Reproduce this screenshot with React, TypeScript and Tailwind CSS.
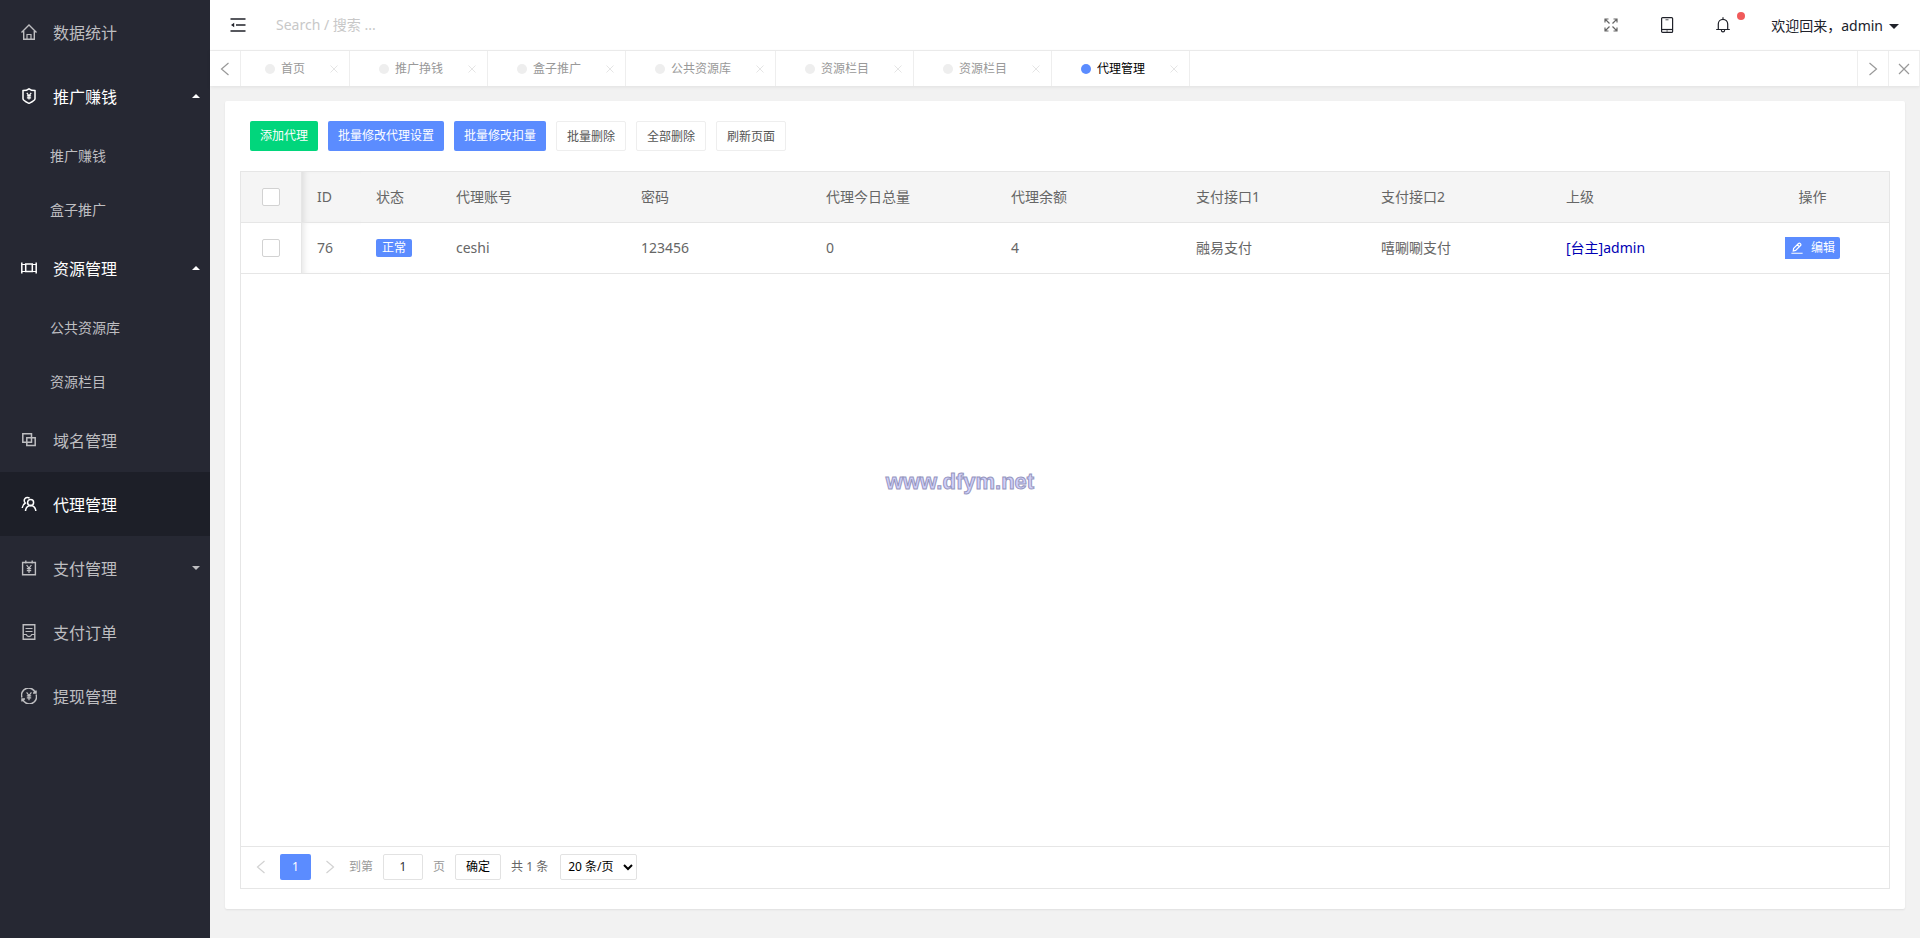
import type { ReactNode } from "react";

const Svg = ({ children, className = "size-4" }: { children: ReactNode; className?: string }) => (
  <svg viewBox="0 0 16 16" className={`shrink-0 ${className}`} fill="none" stroke="currentColor" strokeWidth="1.2" aria-hidden="true">
    {children}
  </svg>
);

const HomeIcon = () => (
  <Svg>
    <path strokeWidth="1.4" d="M.5 8.500 8 1l7.500 7.500M2.700 7v8.300h10.600V7" />
    <path d="M6 15.300v-4.800h4v4.800" />
  </Svg>
);

const ShieldIcon = () => (
  <Svg>
    <path strokeWidth="1.5" d="M8 .8c1.600 1.200 3.600 1.700 6 1.800v8.100c0 1.800-2.600 3-6 4.700-3.400-1.700-6-2.900-6-4.700V2.600C4.400 2.500 6.400 2 8 .8Z" />
    <path d="m5.800 4.800 2.200 3 2.200-3M8 7.500v4M5.900 7.900h4.200M5.900 9.800h4.200" />
  </Svg>
);

const ResourceIcon = () => (
  <Svg>
    <path strokeWidth="1.500" d="M.8 2.500v11M15.200 2.500v11M4.700 4h6.600v7.500H4.700z" />
    <path d="M.8 4.500h4M11.200 4.500h4M.8 11.500h4M11.200 11.500h4" />
  </Svg>
);

const DomainIcon = () => (
  <Svg>
    <path strokeWidth="1.500" d="M1.800 1.800h8.700v8.400H1.800zM5.800 5.800h8.400v7.700H5.800z" />
  </Svg>
);

const AgentIcon = () => (
  <Svg>
    <path strokeWidth="1.500" d="M8.600 2.200A3 3 0 1 0 4.300 7C2.500 8 1.500 9.500 1.200 12" />
    <circle cx="9.600" cy="6.500" r="3" strokeWidth="1.500" />
    <path strokeWidth="1.500" d="M4.500 15c.3-3 2-5.300 5.100-5.500 3.100.2 4.900 2.500 5.200 5.500" />
  </Svg>
);

const PayIcon = () => (
  <Svg>
    <path strokeWidth="1.400" d="M1.600 2.500h12.800v12.200H1.600zM4.800.5v3M11.200.5v3" />
    <path d="m5.600 5 2.400 3.200L10.400 5M8 8v5M5.800 8.600h4.400M5.800 10.600h4.400" />
  </Svg>
);

const OrderIcon = () => (
  <Svg>
    <path strokeWidth="1.400" d="M2.200.7h11.600v14.600H2.200z" />
    <path d="M4.500 4.500h7M4.500 7.500h7M2.200 10.500h3C5.800 12 6.800 12.600 8 12.600s2.200-.6 2.800-2.100h3" />
  </Svg>
);

const WithdrawIcon = () => (
  <Svg>
    <path strokeWidth="1.500" d="M.9 9.500A7.100 7.100 0 0 1 14.300 4.800M15.100 6.500A7.100 7.100 0 0 1 1.700 11.200M12 5h3V2.500M4 11H1v2.500" />
    <path d="m5.600 4.300 2.400 3.200 2.400-3.200M8 7.500v4.700M5.800 7.900h4.400M5.800 9.800h4.400" />
  </Svg>
);

const Chevron = ({ dir }: { dir: "left" | "right" }) => (
  <Svg>
    <path d={dir === "left" ? "M11.500 2 4.500 8l7 6" : "m4.500 2 7 6-7 6"} />
  </Svg>
);

const Caret = ({ up = false }: { up?: boolean }) => (
  <svg viewBox="0 0 8 4" className="h-1 w-2" fill="currentColor" aria-hidden="true">
    <path d={up ? "M0 4 4 0l4 4z" : "M0 0h8L4 4z"} />
  </svg>
);

const menu = [
  { name: "数据统计", icon: <HomeIcon /> },
  { name: "推广赚钱", icon: <ShieldIcon />, open: true, children: ["推广赚钱", "盒子推广"] },
  { name: "资源管理", icon: <ResourceIcon />, open: true, children: ["公共资源库", "资源栏目"] },
  { name: "域名管理", icon: <DomainIcon /> },
  { name: "代理管理", icon: <AgentIcon />, active: true },
  { name: "支付管理", icon: <PayIcon />, open: false, children: [] },
  { name: "支付订单", icon: <OrderIcon /> },
  { name: "提现管理", icon: <WithdrawIcon /> },
];

const tabs = ["首页", "推广挣钱", "盒子推广", "公共资源库", "资源栏目", "资源栏目", "代理管理"];

const columns = ["代理账号", "密码", "代理今日总量", "代理余额", "支付接口1", "支付接口2", "上级"];

const Sidebar = () => (
  <nav className="w-[210px] shrink-0 bg-[#262833] text-[#bebec1]">
    <ul>
      {menu.map((item) => (
        <li key={item.name}>
          <a
            href="#"
            className={`flex h-16 items-center pr-[10px] pl-[21px] text-base ${item.active ? "bg-[#1d1f28] text-white" : ""} ${item.open ? "text-white" : ""}`}
          >
            {item.icon}
            <span className="ml-4 flex-1 pt-0.5">{item.name}</span>
            {item.children && <Caret up={item.open} />}
          </a>
          {item.open && (
            <ul>
              {item.children?.map((child) => (
                <li key={child}>
                  <a href="#" className="flex h-[54px] items-center pt-0.5 pl-[50px] text-sm">
                    {child}
                  </a>
                </li>
              ))}
            </ul>
          )}
        </li>
      ))}
    </ul>
  </nav>
);

const Header = () => (
  <header className="flex h-[51px] items-center border-b border-[#eeeeee] bg-white pr-[21px] pl-5 text-[#20222a]">
    <button type="button" aria-label="收起菜单">
      <Svg>
        <path strokeWidth="1.500" d="M.5 2h15M6 8h9.500M.5 14h15" />
        <path fill="currentColor" stroke="none" d="M4.200 5.800v4.400L1 8z" />
      </Svg>
    </button>
    <input
      type="text"
      aria-label="搜索"
      placeholder="Search / 搜索 ..."
      className="ml-[30px] w-40 text-sm outline-none placeholder:text-[#c8c8c8]"
    />
    <div className="ml-auto flex items-center">
      <button type="button" aria-label="全屏" className="mr-10 text-[#666]">
        <Svg>
          <path d="M6.500 6.500 2 2m0 3.500V2h3.500M9.500 6.500 14 2m-3.500 0H14v3.500M6.500 9.500 2 14m0-3.500V14h3.500M9.500 9.500 14 14m-3.500 0H14v-3.500" />
        </Svg>
      </button>
      <button type="button" aria-label="手机" className="mr-10">
        <Svg>
          <rect x="2.600" y=".6" width="11" height="14.800" rx="1" />
          <path d="M2.600 12.500h11" />
          <path strokeWidth=".8" d="M6.500 2.800h3M7.300 14h1.600" />
        </Svg>
      </button>
      <button type="button" aria-label="消息" className="relative mr-10">
        <Svg>
          <path d="M1.200 12.500h13.600M3.300 12.500V7a4.700 4.700 0 0 1 9.400 0v5.500M8 .3v2M6.300 13c.2 2.600 3.200 2.600 3.400 0" />
        </Svg>
        <span className="absolute -top-[5px] -right-[14px] size-2 rounded-full bg-[#f05a5a]" />
      </button>
      <button type="button" className="flex items-center gap-[6px] pt-0.5 text-sm">
        欢迎回来，admin
        <svg viewBox="0 0 10 5" className="h-[5px] w-[10px]" fill="currentColor" aria-hidden="true">
          <path d="M0 0h10L5 5z" />
        </svg>
      </button>
    </div>
  </header>
);

const TabBar = () => (
  <div className="flex h-[35px] bg-white text-xs text-[#999] shadow-[0_1px_4px_rgba(0,0,0,0.08)]">
    <button type="button" aria-label="向左" className="flex w-[31px] items-center justify-center border-r border-[#eeeeee]">
      <Chevron dir="left" />
    </button>
    {tabs.map((tab, i) => {
      const active = i === tabs.length - 1;
      return (
        <div key={i} className={`flex items-center border-r border-[#eeeeee] pr-[11px] ${i === 0 ? "pl-6" : "pl-[29px]"}`}>
          <span className={`size-[10px] rounded-full ${active ? "bg-[#5b8cff]" : "bg-[#eeeeee]"}`} />
          <a href="#" className={`ml-[6px] ${active ? "text-black" : ""}`}>
            {tab}
          </a>
          <button type="button" aria-label={`关闭${tab}`} className="ml-[25px] text-[#e2e2e2]">
            <Svg className="size-2">
              <path strokeWidth="1.800" d="m1 1 14 14M15 1 1 15" />
            </Svg>
          </button>
        </div>
      );
    })}
    <button type="button" aria-label="向右" className="ml-auto flex w-8 items-center justify-center border-x border-[#eeeeee]">
      <Chevron dir="right" />
    </button>
    <button type="button" aria-label="关闭标签" className="flex w-[31px] items-center justify-center border-r border-[#eeeeee]">
      <Svg>
        <path d="m3 3 10 10M13 3 3 13" />
      </Svg>
    </button>
  </div>
);

const Toolbar = () => (
  <div className="flex gap-[10px] px-[10px] text-xs">
    <button type="button" className="h-[30px] rounded-xs bg-[#01d67c] px-[10px] text-white">添加代理</button>
    <button type="button" className="h-[30px] rounded-xs bg-[#5b8cff] px-[10px] text-white">批量修改代理设置</button>
    <button type="button" className="h-[30px] rounded-xs bg-[#5b8cff] px-[10px] text-white">批量修改扣量</button>
    {["批量删除", "全部删除", "刷新页面"].map((name) => (
      <button key={name} type="button" className="h-[30px] rounded-xs border border-[#eeeeee] bg-white px-[10px] pt-0.5 text-[#555]">
        {name}
      </button>
    ))}
  </div>
);

const Check = ({ label }: { label: string }) => (
  <input
    type="checkbox"
    aria-label={label}
    className="block size-[18px] appearance-none rounded-xs border border-[#d2d2d2] bg-white"
  />
);

const AgentTable = () => (
  <table className="w-full table-fixed border-separate border-spacing-0 text-left text-sm text-[#666] [&_td]:border-b [&_td]:border-[#e6e6e6] [&_th]:border-b [&_th]:border-[#e6e6e6] [&_th]:font-normal">
    <colgroup>
      <col className="w-[60px]" />
      <col className="w-[60px]" />
      <col className="w-[80px]" />
      {columns.map((c) => (
        <col key={c} className="w-[185px]" />
      ))}
      <col />
    </colgroup>
    <thead>
      <tr className="h-[51px] bg-[#f5f5f5]">
        <th className="pl-[21px]">
          <Check label="全选" />
        </th>
        <th className="border-l pl-[15px] shadow-[inset_6px_0_6px_-4px_rgba(0,0,0,0.1)]">ID</th>
        <th className="pl-[15px]">状态</th>
        {columns.map((c) => (
          <th key={c} className="pl-[15px]">{c}</th>
        ))}
        <th className="text-center">操作</th>
      </tr>
    </thead>
    <tbody>
      <tr className="h-[51px]">
        <td className="pl-[21px]">
          <Check label="选择 76" />
        </td>
        <td className="border-l pl-[15px] shadow-[inset_6px_0_6px_-4px_rgba(0,0,0,0.1)]">76</td>
        <td className="pl-[15px]">
          <span className="flex h-[18px] w-9 items-center justify-center rounded-xs bg-[#5b8cff] text-xs text-white">正常</span>
        </td>
        <td className="pl-[15px]">ceshi</td>
        <td className="pl-[15px]">123456</td>
        <td className="pl-[15px]">0</td>
        <td className="pl-[15px]">4</td>
        <td className="pl-[15px]">融易支付</td>
        <td className="pl-[15px]">嘻唰唰支付</td>
        <td className="pl-[15px] text-[#0000b4]">[台主]admin</td>
        <td>
          <button type="button" className="mx-auto flex h-[22px] items-center gap-2 rounded-r-xs bg-[#5b8cff] pr-[5px] pl-[6px] text-xs text-white">
            <Svg className="size-3">
              <path strokeWidth="1.600" d="M.5 15h15M3.500 8.500 10 2c1.500-1.500 4.200 1 2.700 2.700l-6.500 6.500-3.200.8zM8.500 3.700l2.700 2.700" />
            </Svg>
            编辑
          </button>
        </td>
      </tr>
    </tbody>
  </table>
);

const Pagination = () => (
  <div className="flex h-[42px] items-center border-t border-[#e6e6e6] pb-0.5 pl-3 text-xs text-[#999]">
    <button type="button" aria-label="上一页" className="text-[#d2d2d2]">
      <Chevron dir="left" />
    </button>
    <button type="button" className="ml-[11px] h-[26px] w-[31px] rounded-xs bg-[#5b8cff] text-white">1</button>
    <button type="button" aria-label="下一页" className="ml-[11px] text-[#d2d2d2]">
      <Chevron dir="right" />
    </button>
    <label className="ml-[11px] flex items-center gap-[10px]">
      到第
      <input type="text" defaultValue="1" className="h-[26px] w-10 rounded-xs border border-[#e2e2e2] text-center text-[#333]" />
      页
    </label>
    <button type="button" className="ml-[10px] h-[26px] w-[46px] rounded-xs border border-[#e2e2e2] text-black">确定</button>
    <span className="ml-[10px] text-[#666]">共 1 条</span>
    <select aria-label="每页条数" className="ml-3 h-[26px] w-[77px] rounded-xs border border-[#e2e2e2] bg-white pl-[3px] text-black">
      <option>20 条/页</option>
    </select>
  </div>
);

const App = () => {
  return (
    <div className="relative flex min-h-screen bg-[#f2f2f2] font-['Noto_Sans','Noto_Sans_CJK_SC',sans-serif]">
      <Sidebar />
      <div className="flex min-w-0 flex-1 flex-col">
        <Header />
        <TabBar />
        <main className="flex flex-1 flex-col px-[15px] pt-[15px] pb-[29px]">
          <div className="flex flex-1 flex-col rounded-xs bg-white px-[15px] py-5 shadow-[0_1px_2px_rgba(0,0,0,0.08)]">
            <Toolbar />
            <div className="mt-5 flex flex-1 flex-col border border-[#e6e6e6]">
              <div className="flex-1">
                <AgentTable />
              </div>
              <Pagination />
            </div>
          </div>
        </main>
      </div>
      {/* watermark */}
      <div className="pointer-events-none absolute inset-0 flex items-center justify-center pt-6 font-['Liberation_Sans',sans-serif] text-[22px] font-bold text-[#d0d0fa] [-webkit-text-stroke:1px_#9696be]">
        www.dfym.net
      </div>
    </div>
  );
};

export default App;
